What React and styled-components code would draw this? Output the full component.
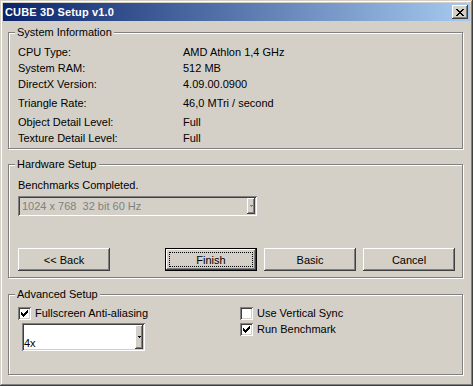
import React from 'react';
import styled, { createGlobalStyle } from 'styled-components';

const GlobalStyle = createGlobalStyle`
  html, body {
    margin: 0;
    padding: 0;
    background: #d4d0c8;
  }
  body {
    font-family: "Liberation Sans", Arial, sans-serif;
    font-size: 11px;
    color: #000;
  }
`;

const raised = `
  box-shadow: inset -1px -1px 0 #404040, inset 1px 1px 0 #fff,
    inset -2px -2px 0 #808080, inset 2px 2px 0 #d4d0c8;
`;

const sunken = `
  box-shadow: inset 1px 1px 0 #808080, inset -1px -1px 0 #fff,
    inset 2px 2px 0 #404040, inset -2px -2px 0 #d4d0c8;
`;

const Window = styled.div`
  width: 473px;
  height: 386px;
  box-sizing: border-box;
  padding: 3px;
  background: #d4d0c8;
  box-shadow: inset -1px -1px 0 #404040, inset 1px 1px 0 #d4d0c8,
    inset -2px -2px 0 #808080, inset 2px 2px 0 #fff;
  display: flex;
  flex-direction: column;
`;

const TitleBar = styled.div`
  height: 18px;
  display: flex;
  align-items: center;
  justify-content: space-between;
  padding-left: 2px;
  background: linear-gradient(to right, #0a246a, #a6caf0);
  color: #fff;
  font-weight: bold;
  font-size: 11px;
  letter-spacing: 0.15px;
`;

const CloseButton = styled.div`
  width: 16px;
  height: 14px;
  margin-right: 2px;
  background: #d4d0c8;
  display: flex;
  align-items: center;
  justify-content: center;
  ${raised}
`;

const Content = styled.div`
  padding: 5px 7px 0 5px;
  display: flex;
  flex-direction: column;
  gap: 9px;
`;

const Group = styled.fieldset`
  margin: ${(p) => p.$top || 0}px 0 0 0;
  padding: 0;
  min-width: 0;
  border: 1px solid #808080;
  box-shadow: inset 1px 1px 0 #fff, 1px 1px 0 #fff;
`;

const Legend = styled.legend`
  margin-left: 6px;
  padding: 0 2px;
  line-height: 13px;
  background: #d4d0c8;
`;

const GroupBody = styled.div`
  padding: ${(p) => p.$pad};
  display: ${(p) => (p.$row ? 'flex' : 'block')};
`;

const InfoRow = styled.div`
  display: grid;
  grid-template-columns: 165px 1fr;
  line-height: 16px;
  margin-top: ${(p) => p.$gap || 0}px;
`;

const Status = styled.div`
  line-height: 16px;
`;

const Combo = styled.div`
  width: ${(p) => p.$width}px;
  height: ${(p) => p.$height}px;
  margin: ${(p) => p.$margin};
  box-sizing: border-box;
  padding: 2px;
  display: flex;
  background: ${(p) => (p.$disabled ? '#d4d0c8' : '#fff')};
  ${sunken}
`;

const ComboText = styled.div`
  flex: 1;
  display: flex;
  align-items: ${(p) => p.$align || 'center'};
  padding: 0 0 0 ${(p) => p.$indent ?? 2}px;
  color: ${(p) => (p.$disabled ? '#808080' : '#000')};
  white-space: pre;
`;

const DropButton = styled.div`
  width: 8px;
  background: #d4d0c8;
  display: flex;
  align-items: center;
  justify-content: center;
  ${raised}
`;

const ButtonRow = styled.div`
  display: flex;
  gap: 7px;
  margin-top: 32px;
`;

const Button = styled.div`
  width: 92px;
  height: 23px;
  box-sizing: border-box;
  margin-left: ${(p) => p.$offset || 0}px;
  display: flex;
  align-items: center;
  justify-content: center;
  background: #d4d0c8;
  ${raised}
  ${(p) =>
    p.$default &&
    `
    border: 1px solid #000;
    position: relative;
  `}
`;

const FocusRing = styled.span`
  position: absolute;
  inset: 3px;
  border: 1px dotted #000;
`;

const Column = styled.div`
  width: ${(p) => p.$width || 'auto'};
  display: flex;
  flex-direction: column;
`;

const CheckRow = styled.label`
  display: flex;
  align-items: center;
  gap: 4px;
  height: 16px;
  line-height: 16px;
`;

const Box = styled.span`
  width: 13px;
  height: 13px;
  box-sizing: border-box;
  background: #fff;
  display: flex;
  align-items: center;
  justify-content: center;
  ${sunken}
`;

const CloseGlyph = () => (
  <svg width="8" height="7" viewBox="0 0 8 7" shapeRendering="crispEdges">
    <path
      d="M0 0h2v1H0zM6 0h2v1H6zM1 1h2v1H1zM5 1h2v1H5zM2 2h4v1H2zM3 3h2v1H3zM2 4h4v1H2zM1 5h2v1H1zM5 5h2v1H5zM0 6h2v1H0zM6 6h2v1H6z"
      fill="#000"
    />
  </svg>
);

const Arrow = ({ disabled }) => (
  <svg width="3" height="2" viewBox="0 0 3 2" shapeRendering="crispEdges">
    <path d="M0 0h3v1H0zM1 1h1v1H1z" fill={disabled ? '#808080' : '#000'} />
  </svg>
);

const Checkbox = ({ checked, label }) => (
  <CheckRow>
    <Box>
      {checked && (
        <svg width="7" height="7" viewBox="0 0 7 7" shapeRendering="crispEdges">
          <path
            d="M6 0h1v3H6zM5 1h1v3H5zM4 2h1v3H4zM3 3h1v3H3zM2 4h1v3H2zM1 3h1v3H1zM0 2h1v3H0z"
            fill="#000"
          />
        </svg>
      )}
    </Box>
    {label}
  </CheckRow>
);

const info = [
  ['CPU Type:', 'AMD Athlon 1,4 GHz', 0],
  ['System RAM:', '512 MB', 0],
  ['DirectX Version:', '4.09.00.0900', 0],
  ['Triangle Rate:', '46,0 MTri / second', 3],
  ['Object Detail Level:', 'Full', 3],
  ['Texture Detail Level:', 'Full', 0],
];

const App = () => {
  return (
    <Window>
      <GlobalStyle />
      <TitleBar>
        CUBE 3D Setup v1.0
        <CloseButton>
          <CloseGlyph />
        </CloseButton>
      </TitleBar>
      <Content>
        <Group>
          <Legend>System Information</Legend>
          <GroupBody $pad="5px 0 2px 9px">
            {info.map(([label, value, gap]) => (
              <InfoRow key={label} $gap={gap}>
                <span>{label}</span>
                <span>{value}</span>
              </InfoRow>
            ))}
          </GroupBody>
        </Group>

        <Group>
          <Legend>Hardware Setup</Legend>
          <GroupBody $pad="6px 0 6px 9px">
            <Status>Benchmarks Completed.</Status>
            <Combo $width={239} $height={20} $margin="3px 0 0 0" $disabled>
              <ComboText $disabled>1024 x 768  32 bit 60 Hz</ComboText>
              <DropButton>
                <Arrow disabled />
              </DropButton>
            </Combo>
            <ButtonRow>
              <Button>&lt;&lt; Back</Button>
              <Button $default $offset={48}>
                <FocusRing />
                Finish
              </Button>
              <Button>Basic</Button>
              <Button>Cancel</Button>
            </ButtonRow>
          </GroupBody>
        </Group>

        <Group $top={1}>
          <Legend>Advanced Setup</Legend>
          <GroupBody $pad="4px 0 23px 9px" $row>
            <Column $width="222px">
              <Checkbox checked label="Fullscreen Anti-aliasing" />
              <Combo $width={123} $height={28} $margin="2px 0 0 4px">
                <ComboText $align="flex-end" $indent={0}>4x</ComboText>
                <DropButton>
                  <Arrow />
                </DropButton>
              </Combo>
            </Column>
            <Column>
              <Checkbox label="Use Vertical Sync" />
              <Checkbox checked label="Run Benchmark" />
            </Column>
          </GroupBody>
        </Group>
      </Content>
    </Window>
  );
};

export default App;
